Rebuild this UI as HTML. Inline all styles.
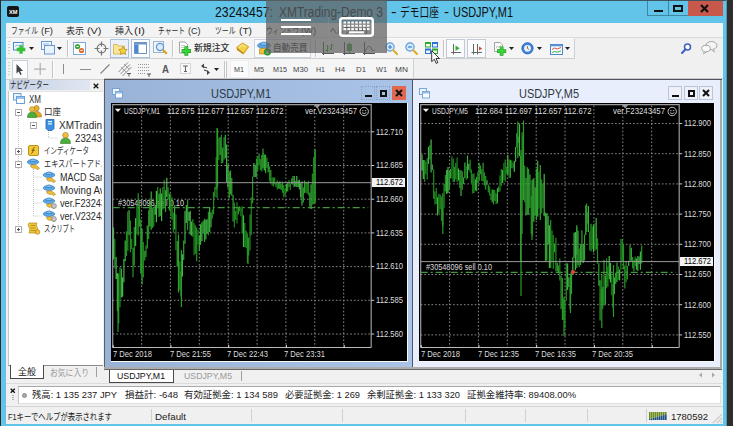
<!DOCTYPE html>
<html lang="ja"><head><meta charset="utf-8"><title>MetaTrader 4</title>
<style>
html,body{margin:0;padding:0;}
body{width:733px;height:426px;overflow:hidden;position:relative;background:#2e2e2e;font-family:"Liberation Sans","Noto Sans CJK JP",sans-serif;}
div,span.t,svg{position:absolute;box-sizing:border-box;}
span.t{white-space:nowrap;display:block;}
svg{overflow:visible;}
</style></head><body>

<div style="left:0px;top:0px;width:727px;height:426px;background:#62c4e8;"></div>
<div style="left:0px;top:0px;width:727px;height:1.3px;background:#3d5560;"></div>
<div style="left:0px;top:0px;width:1px;height:426px;background:#2b2b2b;"></div>
<div style="left:726px;top:0px;width:1px;height:426px;background:#4f9ab8;"></div>
<div style="left:7px;top:5.5px;width:11.5px;height:11.5px;background:#151515;border-radius:2px;"></div>
<span class="t" style="left:8.5px;top:8.5px;font-size:5.5px;line-height:6px;color:#fff;transform:scaleX(1.0303);transform-origin:0 0;font-weight:bold;">XM</span>
<span class="t" style="left:215px;top:3px;font-size:14px;line-height:18px;color:#111;transform:scaleX(0.8763);transform-origin:0 0;">23243457:</span>
<span class="t" style="left:278.5px;top:3px;font-size:14px;line-height:18px;color:#111;transform:scaleX(0.8550);transform-origin:0 0;">XMTrading-Demo 3</span>
<span class="t" style="left:390.5px;top:3px;font-size:14px;line-height:18px;color:#111;transform:scaleX(1.1773);transform-origin:0 0;">-</span>
<span class="t" style="left:400px;top:3.6px;font-size:12.5px;line-height:18px;color:#111;transform:scaleX(0.7798);transform-origin:0 0;">デモ口座</span>
<span class="t" style="left:444px;top:3px;font-size:14px;line-height:18px;color:#111;transform:scaleX(1.0702);transform-origin:0 0;">-</span>
<span class="t" style="left:453px;top:3px;font-size:14px;line-height:18px;color:#111;transform:scaleX(0.7814);transform-origin:0 0;">USDJPY,M1</span>
<div style="left:647px;top:1px;width:21px;height:15px;border-left:1px solid #3f86a3;border-bottom:1px solid #3f86a3;"></div>
<div style="left:668px;top:1px;width:20px;height:15px;border-left:1px solid #3f86a3;border-bottom:1px solid #3f86a3;"></div>
<div style="left:688px;top:1px;width:35px;height:15px;background:#c9584c;"></div>
<div style="left:654px;top:10px;width:9px;height:2px;background:#111;"></div>
<div style="left:673px;top:5px;width:10px;height:7px;border:2px solid #111;"></div>
<svg style="left:700px;top:4px;" width="9" height="9" viewBox="0 0 9 9" ><path d="M1 1L8 8M8 1L1 8" stroke="#111" stroke-width="2.2" fill="none"/></svg>
<div style="left:6px;top:23px;width:716.5px;height:400.8px;background:#f0f0f0;"></div>
<div style="left:6px;top:23px;width:716.5px;height:14px;background:#f3f3f3;"></div>
<span class="t" style="left:11px;top:23.5px;font-size:9px;line-height:14px;color:#2c2c2c;transform:scaleX(0.7497);transform-origin:0 0;">ファイル</span>
<span class="t" style="left:40.5px;top:23.5px;font-size:9.5px;line-height:14px;color:#2c2c2c;transform:scaleX(0.9884);transform-origin:0 0;">(F)</span>
<span class="t" style="left:66px;top:23.5px;font-size:9px;line-height:14px;color:#2c2c2c;transform:scaleX(0.9991);transform-origin:0 0;">表示</span>
<span class="t" style="left:86.5px;top:23.5px;font-size:9.5px;line-height:14px;color:#2c2c2c;transform:scaleX(1.1443);transform-origin:0 0;">(V)</span>
<span class="t" style="left:115px;top:23.5px;font-size:9px;line-height:14px;color:#2c2c2c;transform:scaleX(0.9991);transform-origin:0 0;">挿入</span>
<span class="t" style="left:133.5px;top:23.5px;font-size:9.5px;line-height:14px;color:#2c2c2c;transform:scaleX(1.2265);transform-origin:0 0;">(I)</span>
<span class="t" style="left:158px;top:23.5px;font-size:9px;line-height:14px;color:#2c2c2c;transform:scaleX(0.7516);transform-origin:0 0;">チャート</span>
<span class="t" style="left:187.5px;top:23.5px;font-size:9.5px;line-height:14px;color:#2c2c2c;transform:scaleX(0.9467);transform-origin:0 0;">(C)</span>
<span class="t" style="left:215px;top:23.5px;font-size:9px;line-height:14px;color:#2c2c2c;transform:scaleX(0.7588);transform-origin:0 0;">ツール</span>
<span class="t" style="left:239px;top:23.5px;font-size:9.5px;line-height:14px;color:#2c2c2c;transform:scaleX(1.0708);transform-origin:0 0;">(T)</span>
<span class="t" style="left:266px;top:23.5px;font-size:9px;line-height:14px;color:#2c2c2c;transform:scaleX(0.7331);transform-origin:0 0;">ウィンドウ</span>
<span class="t" style="left:301px;top:23.5px;font-size:9.5px;line-height:14px;color:#2c2c2c;transform:scaleX(0.9806);transform-origin:0 0;">(W)</span>
<span class="t" style="left:330px;top:23.5px;font-size:9px;line-height:14px;color:#2c2c2c;transform:scaleX(0.7588);transform-origin:0 0;">ヘルプ</span>
<span class="t" style="left:353.5px;top:23.5px;font-size:9.5px;line-height:14px;color:#2c2c2c;transform:scaleX(1.0225);transform-origin:0 0;">(H)</span>
<div style="left:6px;top:37px;width:717px;height:1px;background:#dadada;"></div>
<div style="left:6px;top:38px;width:568.5px;height:21px;background:#f5f5f5;border-top:1px solid #fcfcfc;border-bottom:1px solid #cfcfcf;border-right:1px solid #cfcfcf;"></div>
<div style="left:6px;top:59px;width:408px;height:21px;background:#f5f5f5;border-bottom:1px solid #cfcfcf;border-right:1px solid #cfcfcf;"></div>
<div style="left:8px;top:41px;width:1.5px;height:15px;background:repeating-linear-gradient(#cfcfcf 0 1px,#f5f5f5 1px 3px);"></div>
<div style="left:8px;top:62px;width:1.5px;height:15px;background:repeating-linear-gradient(#cfcfcf 0 1px,#f5f5f5 1px 3px);"></div>
<svg style="left:13px;top:41px;" width="15" height="15" viewBox="0 0 15 15" ><rect x="0.500" y="1.500" width="9.500" height="7.500" fill="#eef5fd" stroke="#4a86cc"/><path d="M2 5.500l2-1.500 2 1 2.500-1.500" stroke="#7aa7dc" stroke-width="0.800" fill="none"/><path d="M8 4.200v8.600M3.700 8.500h8.600" stroke="#34c234" stroke-width="3.300"/></svg>
<svg style="left:29px;top:47px;" width="5" height="3" viewBox="0 0 5 3" ><path d="M0 0h5L2.500 3z" fill="#222"/></svg>
<svg style="left:41px;top:41px;" width="15" height="15" viewBox="0 0 15 15" ><rect x="0.500" y="0.500" width="10" height="8" fill="#f4f9ff" stroke="#5b8fd0" stroke-width="0.900"/><rect x="3.500" y="4.500" width="10" height="8.500" fill="#eaf2fc" stroke="#5b8fd0" stroke-width="0.900"/><path d="M2 3h6" stroke="#7aa7dc" stroke-width="0.800"/></svg>
<svg style="left:57px;top:47px;" width="5" height="3" viewBox="0 0 5 3" ><path d="M0 0h5L2.500 3z" fill="#222"/></svg>
<div style="left:67px;top:40px;width:1px;height:17px;background:#c4c4c4;"></div>
<div style="left:68px;top:40px;width:1px;height:17px;background:#fdfdfd;"></div>
<div style="left:73px;top:42px;width:13px;height:13px;background:#fff;border:1px solid #7aaae0;"></div>
<svg style="left:74px;top:43px;" width="11" height="11" viewBox="0 0 11 11" ><circle cx="3.500" cy="3.500" r="2.600" fill="#3aa83a"/><circle cx="7.500" cy="7.500" r="2.600" fill="#e26a2c"/><path d="M2.300 3.500h2.400M6.300 7.500h2.400" stroke="#fff" stroke-width="0.900"/></svg>
<svg style="left:94px;top:41px;" width="15" height="15" viewBox="0 0 15 15" ><circle cx="7.500" cy="7.500" r="4.300" fill="none" stroke="#777" stroke-width="1.200"/><path d="M7.500 0.500v5M7.500 9.500v5M0.500 7.500h5M9.500 7.500h5" stroke="#777" stroke-width="1.200"/></svg>
<div style="left:110px;top:39px;width:19px;height:19px;background:#eaf1fb;border:1px solid #a9c0e0;"></div>
<svg style="left:113px;top:41px;" width="15" height="15" viewBox="0 0 15 15" ><path d="M0.500 3.500h4l1 1.500h6v8h-11z" fill="#fae596" stroke="#d1b04a" stroke-width="0.800"/><path d="M10 5.500l1.300 2.700 3 .400-2.200 2 .600 2.900-2.700-1.500-2.700 1.500.600-2.900-2.200-2 3-.400z" fill="#f4d03f" stroke="#b88a12" stroke-width="0.700"/></svg>
<div style="left:131px;top:39px;width:19px;height:19px;background:#fdfdfe;border:1px solid #a9c0e0;"></div>
<svg style="left:134px;top:42px;" width="13" height="12" viewBox="0 0 13 12" ><rect x="0.500" y="0.500" width="12" height="11" fill="#fff" stroke="#6e94c8"/><rect x="0.500" y="0.500" width="12" height="2" fill="#6e94c8"/><rect x="1" y="2.500" width="3.500" height="8.500" fill="#4f86d0"/></svg>
<svg style="left:153px;top:41px;" width="16" height="16" viewBox="0 0 16 16" ><rect x="0.500" y="0.500" width="10" height="11" fill="#f2f6fb" stroke="#9fb3cc"/><circle cx="7" cy="6" r="3.600" fill="#d8ecfb" stroke="#5b93d6" stroke-width="1.200"/><path d="M9.800 8.800l4 4" stroke="#d9a31e" stroke-width="2.200"/></svg>
<div style="left:172px;top:40px;width:1px;height:17px;background:#c4c4c4;"></div>
<div style="left:173px;top:40px;width:1px;height:17px;background:#fdfdfd;"></div>
<svg style="left:179px;top:41px;" width="13" height="16" viewBox="0 0 13 16" ><path d="M0.500 1h5.500l2.500 2.500v8.500h-8z" fill="#fff" stroke="#9a9a9a" stroke-width="0.900"/><path d="M2 4.500h4M2 6.500h3" stroke="#bbb" stroke-width="0.800"/><path d="M7.300 5.300v9.400M2.600 10h9.400" stroke="#1f9a1f" stroke-width="3.800"/><path d="M7.300 5.800v8.400M3.100 10h8.400" stroke="#3bd33b" stroke-width="2.600"/></svg>
<span class="t" style="left:194px;top:40.5px;font-size:9.3px;line-height:15px;color:#333;transform:scaleX(0.9542);transform-origin:0 0;font-weight:500;">新規注文</span>
<svg style="left:236px;top:42px;" width="13" height="13" viewBox="0 0 13 13" ><path d="M0.500 5.500l6-4.500 6 3.500-5 7z" fill="#f5d04a" stroke="#c4951c" stroke-width="0.800"/><path d="M0.500 5.500l.500 2.500 6.500 4.500 0-1.500z" fill="#b8860b"/><path d="M7.500 11v1.500l5-7v-1.500z" fill="#d9a520"/><path d="M3 5.500l3.500-2.500 3 2" stroke="#fcefb0" stroke-width="1" fill="none"/></svg>
<div style="left:254px;top:39px;width:57px;height:19px;background:#fafbfd;border:1px solid #cdd3de;"></div>
<svg style="left:257px;top:41px;" width="15" height="15" viewBox="0 0 15 15" ><ellipse cx="7" cy="4.500" rx="6.500" ry="3" fill="#5ba7e3" stroke="#2f74b8" stroke-width="0.600"/><path d="M3.500 4c0-4 7-4 7 0z" fill="#86c4f2" stroke="#2f74b8" stroke-width="0.600"/><path d="M2.500 8c2-1 6-1 8 0l1 5h-9z" fill="#f0c23a" stroke="#a87613" stroke-width="0.600"/><circle cx="10.500" cy="11" r="3.300" fill="#35a835" stroke="#1d7a1d" stroke-width="0.600"/><path d="M9.500 9.300l2.600 1.700-2.600 1.700z" fill="#fff"/></svg>
<span class="t" style="left:273px;top:40.5px;font-size:9.3px;line-height:15px;color:#333;transform:scaleX(0.9273);transform-origin:0 0;font-weight:500;">自動売買</span>
<div style="left:315px;top:40px;width:1px;height:17px;background:#c4c4c4;"></div>
<div style="left:316px;top:40px;width:1px;height:17px;background:#fdfdfd;"></div>
<svg style="left:322px;top:42px;" width="12" height="13" viewBox="0 0 12 13" ><path d="M1.500 0v13M0 11.500h12" stroke="#555" stroke-width="1"/><path d="M5.500 3v7M3.500 8.500h2M5.500 4.500h2M9.500 2v6M9.500 3h2M7.500 7h2" stroke="#2a9a2a" stroke-width="1.200"/></svg>
<svg style="left:343px;top:42px;" width="12" height="13" viewBox="0 0 12 13" ><path d="M1.500 0v13M0 11.500h12" stroke="#555" stroke-width="1"/><path d="M6.500 0.500v10" stroke="#2a9a2a" stroke-width="1"/><rect x="4.500" y="2.500" width="4" height="6" fill="#3cb03c" stroke="#1d7a1d" stroke-width="0.700"/></svg>
<svg style="left:363px;top:42px;" width="12" height="13" viewBox="0 0 12 13" ><path d="M1.500 0v13M0 11.500h12" stroke="#555" stroke-width="1"/><path d="M2 10c2-6 5-7 6-4s2 3 3.500 2" stroke="#555" stroke-width="1" fill="none"/></svg>
<svg style="left:384.5px;top:41.5px;" width="14" height="14" viewBox="0 0 14 14" ><circle cx="5" cy="5" r="4.100" fill="#d6eafb" stroke="#5b9bd8" stroke-width="1.200"/><path d="M3 5h4M5 3v4" stroke="#3a7fd0" stroke-width="1.200"/><path d="M8.300 8.300l3.700 3.700" stroke="#dcae32" stroke-width="2.200" stroke-linecap="round"/></svg>
<svg style="left:404.5px;top:41.5px;" width="14" height="14" viewBox="0 0 14 14" ><circle cx="5" cy="5" r="4.100" fill="#d6eafb" stroke="#5b9bd8" stroke-width="1.200"/><path d="M3 5h4" stroke="#3a7fd0" stroke-width="1.200"/><path d="M8.300 8.300l3.700 3.700" stroke="#dcae32" stroke-width="2.200" stroke-linecap="round"/></svg>
<svg style="left:425px;top:42px;" width="13" height="12" viewBox="0 0 13 12" ><rect x="0" y="0" width="6" height="5.500" fill="#2faa2f"/><rect x="7" y="0" width="6" height="5.500" fill="#2d72d8"/><rect x="0" y="6.500" width="6" height="5.500" fill="#2d72d8"/><rect x="7" y="6.500" width="6" height="5.500" fill="#2faa2f"/><rect x="1" y="2" width="4" height="2.500" fill="#f2fbf2"/><rect x="8" y="2" width="4" height="2.500" fill="#eef5ff"/><rect x="1" y="8.500" width="4" height="2.500" fill="#eef5ff"/><rect x="8" y="8.500" width="4" height="2.500" fill="#dff5df"/></svg>
<div style="left:443px;top:40px;width:1px;height:17px;background:#c4c4c4;"></div>
<div style="left:444px;top:40px;width:1px;height:17px;background:#fdfdfd;"></div>
<div style="left:446px;top:39px;width:19px;height:19px;background:#fafbfd;border:1px solid #c3cad6;"></div>
<svg style="left:450px;top:43px;" width="12" height="12" viewBox="0 0 12 12" ><path d="M3.500 1v10.500M1 9.500h10" stroke="#666" stroke-width="1"/><path d="M5.500 2.500l4.200 2.800-4.200 2.800z" fill="#35b035"/></svg>
<div style="left:467px;top:39px;width:19px;height:19px;background:#fafbfd;border:1px solid #c3cad6;"></div>
<svg style="left:471px;top:43px;" width="12" height="12" viewBox="0 0 12 12" ><path d="M2.500 1v10.500M0.500 9.500h10.500M6.500 1v10.500" stroke="#666" stroke-width="1"/><path d="M8 3.500l3.200 2-3.200 2z" fill="#d8432a"/></svg>
<svg style="left:494px;top:42px;" width="14" height="15" viewBox="0 0 14 15" ><path d="M0.500 0.500h5.500l2.500 2.500v6.500h-8z" fill="#fff" stroke="#9a9a9a" stroke-width="0.900"/><path d="M2 6.500l1.500-2.500 1.500 1.500 1.500-2" stroke="#aaa" stroke-width="0.800" fill="none"/><path d="M7.600 4.600v9.200M3 9.200h9.200" stroke="#1f9a1f" stroke-width="3.700"/><path d="M7.600 5.100v8.200M3.500 9.200h8.200" stroke="#3bd33b" stroke-width="2.500"/></svg>
<svg style="left:509px;top:47px;" width="5" height="3" viewBox="0 0 5 3" ><path d="M0 0h5L2.500 3z" fill="#222"/></svg>
<svg style="left:521px;top:42px;" width="13" height="13" viewBox="0 0 13 13" ><circle cx="6.500" cy="6.300" r="5.600" fill="#3a84dc" stroke="#2360b5" stroke-width="0.900"/><circle cx="6.500" cy="6.300" r="3.400" fill="#e9f1fb"/><path d="M6.500 4.200v2.300l1.600 1" stroke="#b0523f" stroke-width="0.900" fill="none"/></svg>
<svg style="left:537px;top:47px;" width="5" height="3" viewBox="0 0 5 3" ><path d="M0 0h5L2.500 3z" fill="#222"/></svg>
<svg style="left:549.5px;top:43.5px;" width="13" height="11" viewBox="0 0 13 11" ><rect x="0.500" y="0.500" width="12" height="10" fill="#f4f9ff" stroke="#4a86cc"/><rect x="0.500" y="0.500" width="12" height="1.800" fill="#5b93d6"/><path d="M2 5.500l2.500-1.500 2.500 1 4-1.500" stroke="#d8432a" stroke-width="0.900" fill="none"/><path d="M2 8.500l2.500-1 2.500.700 4-1.200" stroke="#2fae2f" stroke-width="0.900" fill="none"/></svg>
<svg style="left:565px;top:47px;" width="5" height="3" viewBox="0 0 5 3" ><path d="M0 0h5L2.500 3z" fill="#222"/></svg>
<div style="left:12px;top:60px;width:16px;height:19px;background:#fbfcfe;border:1px solid #c9cfda;"></div>
<svg style="left:15.5px;top:63.5px;" width="8" height="12" viewBox="0 0 8 12" ><path d="M0.500 0v9.500l2.200-2.100 1.600 3.600 1.400-.600-1.600-3.500h3z" fill="#444"/></svg>
<svg style="left:34px;top:63px;" width="12" height="12" viewBox="0 0 12 12" ><path d="M6.200 0v12M0 6.200h12" stroke="#b0b0b0" stroke-width="1.200"/></svg>
<div style="left:52px;top:61px;width:1px;height:17px;background:#c4c4c4;"></div>
<div style="left:53px;top:61px;width:1px;height:17px;background:#fdfdfd;"></div>
<div style="left:63px;top:64px;width:1px;height:10px;background:#8c8c8c;"></div>
<div style="left:80px;top:69px;width:11px;height:1px;background:#8c8c8c;"></div>
<svg style="left:100px;top:64px;" width="10" height="10" viewBox="0 0 10 10" ><path d="M0.500 9.500L9.500 0.500" stroke="#808080" stroke-width="1.100"/></svg>
<svg style="left:118px;top:62px;" width="14" height="15" viewBox="0 0 14 15" ><path d="M0.500 10L10 0.500M2.500 12L12 2.500M4.500 14L13.500 5" stroke="#8a8a8a" stroke-width="1"/><path d="M3 5l5 5M6 2l5 5" stroke="#8a8a8a" stroke-width="0.800"/><path d="M9 11.500h4M11 11.500v3" stroke="#333" stroke-width="0.800"/></svg>
<svg style="left:138px;top:63px;" width="14" height="14" viewBox="0 0 14 14" ><path d="M0 1.500h12M0 4.500h12M0 7.500h12M0 10.500h8" stroke="#9a9a9a" stroke-width="1" stroke-dasharray="1 1"/><path d="M9 11h4M11 11v3" stroke="#333" stroke-width="0.800"/></svg>
<span class="t" style="left:162px;top:63px;font-size:10px;line-height:13px;color:#555;transform:scaleX(0.9676);transform-origin:0 0;font-weight:bold;">A</span>
<svg style="left:180px;top:63px;" width="11" height="11" viewBox="0 0 11 11" ><rect x="0.500" y="0.500" width="10" height="10" fill="#fafafa" stroke="#b0b0b0" stroke-dasharray="1 1"/><path d="M3 3h5M5.500 3v5.500M4 8.500h3" stroke="#666" stroke-width="1.100"/></svg>
<svg style="left:200px;top:63px;" width="11" height="13" viewBox="0 0 11 13" ><path d="M1 3l3-2.500v5zM10 9.500l-3 2.500v-5z" fill="#444"/><path d="M4 4l3 1M7 8l-3-1" stroke="#444" stroke-width="1.200"/></svg>
<svg style="left:214px;top:68px;" width="5" height="3" viewBox="0 0 5 3" ><path d="M0 0h5L2.500 3z" fill="#222"/></svg>
<div style="left:224px;top:61px;width:1px;height:17px;background:#c4c4c4;"></div>
<div style="left:225px;top:61px;width:1px;height:17px;background:#fdfdfd;"></div>
<div style="left:226px;top:61px;width:1px;height:17px;background:#c4c4c4;"></div>
<div style="left:230px;top:60px;width:19px;height:18px;background:#fbfbfb;border:1px solid #eceef2;"></div>
<span class="t" style="left:234px;top:64px;font-size:8px;line-height:11px;color:#444;transform:scaleX(0.8989);transform-origin:0 0;">M1</span>
<span class="t" style="left:254px;top:64px;font-size:8px;line-height:11px;color:#444;transform:scaleX(0.8989);transform-origin:0 0;">M5</span>
<span class="t" style="left:273px;top:64px;font-size:8px;line-height:11px;color:#444;transform:scaleX(0.8996);transform-origin:0 0;">M15</span>
<span class="t" style="left:293px;top:64px;font-size:8px;line-height:11px;color:#444;transform:scaleX(0.9639);transform-origin:0 0;">M30</span>
<span class="t" style="left:316px;top:64px;font-size:8px;line-height:11px;color:#444;transform:scaleX(0.8794);transform-origin:0 0;">H1</span>
<span class="t" style="left:335px;top:64px;font-size:8px;line-height:11px;color:#444;transform:scaleX(0.9771);transform-origin:0 0;">H4</span>
<span class="t" style="left:356px;top:64px;font-size:8px;line-height:11px;color:#444;transform:scaleX(0.9771);transform-origin:0 0;">D1</span>
<span class="t" style="left:376px;top:64px;font-size:8px;line-height:11px;color:#444;transform:scaleX(0.9167);transform-origin:0 0;">W1</span>
<span class="t" style="left:395px;top:64px;font-size:8px;line-height:11px;color:#444;transform:scaleX(1.0439);transform-origin:0 0;">MN</span>
<svg style="left:681px;top:43px;" width="11" height="11" viewBox="0 0 11 11" ><circle cx="6.500" cy="4" r="3" fill="#fff" stroke="#3d5fc0" stroke-width="1.500"/><path d="M4.500 6.300l-3.500 3.700" stroke="#3d5fc0" stroke-width="2" stroke-linecap="round"/></svg>
<svg style="left:701px;top:41px;" width="17" height="13" viewBox="0 0 17 13" ><ellipse cx="10.500" cy="4.500" rx="5.500" ry="4" fill="#f4f4f4" stroke="#9a9a9a" stroke-width="0.900"/><path d="M12 8l1.500 3-3.500-2.700" fill="#f4f4f4" stroke="#9a9a9a" stroke-width="0.800"/><ellipse cx="5" cy="7.500" rx="4.300" ry="3.200" fill="#fafafa" stroke="#9a9a9a" stroke-width="0.900"/><path d="M3.500 10.300l-1 2.500 3-2" fill="#fafafa" stroke="#9a9a9a" stroke-width="0.800"/></svg>
<div style="left:7px;top:80px;width:96px;height:303px;background:#f0f0f0;"></div>
<div style="left:9px;top:80px;width:81px;height:10.3px;background:linear-gradient(90deg,#c3cfe3,#e1e7f1);"></div>
<span class="t" style="left:10px;top:79px;font-size:9px;line-height:12px;color:#222;transform:scaleX(0.7220);transform-origin:0 0;">ナビゲーター</span>
<svg style="left:93px;top:83px;" width="6" height="6" viewBox="0 0 6 6" ><path d="M0.7 0.7L5.3 5.3M5.3 0.7L0.7 5.3" stroke="#111" stroke-width="1.3" fill="none"/></svg>
<div style="left:8px;top:91px;width:95.3px;height:275px;background:#fff;border:1px solid #e3e3e3;border-left-color:#c6c6c6;border-right:none;border-bottom-color:#8c8c8c;"></div>
<svg style="left:0px;top:0px;" width="110" height="260" viewBox="0 0 110 260" ><path d="M18.5 116V229M33.5 129V125M18.5 151H24M18.5 229H24M48.5 130V138H58M33.5 169V216M33.5 177H42M33.5 190H42M33.5 203H42M33.5 216H42" stroke="#c4c4c4" stroke-width="1" stroke-dasharray="1 1" fill="none"/></svg>
<svg style="left:13px;top:93px;" width="12" height="11" viewBox="0 0 12 11" ><rect x="0.5" y="0.5" width="7.5" height="6.5" fill="#eaf3fc" stroke="#6a9fdc"/><rect x="3.5" y="3.5" width="8" height="7" fill="#fff" stroke="#6a9fdc"/><rect x="4" y="4" width="7" height="2" fill="#9cc2ec"/></svg>
<div style="left:29px;top:91px;width:72.5px;height:15px;overflow:hidden;">
<span class="t" style="left:0px;top:0.5px;font-size:10px;line-height:15px;color:#2a2a2a;transform:scaleX(0.8000);transform-origin:0 0;">XM</span>
</div>
<svg style="left:15px;top:109px;" width="7" height="7" viewBox="0 0 7 7" ><rect x="0.5" y="0.5" width="6" height="6" fill="#fff" stroke="#adadad"/><path d="M2 3.5h3" stroke="#555" stroke-width="1"/></svg>
<svg style="left:27px;top:105px;" width="15" height="13" viewBox="0 0 15 13" ><circle cx="9.5" cy="3.3" r="2.7" fill="#e8b12d" stroke="#a87613" stroke-width="0.6"/><path d="M4.5 12c0-4 2-5.5 5-5.5s5 1.5 5 5.5z" fill="#e0a52a" stroke="#a87613" stroke-width="0.6"/><circle cx="5" cy="4.2" r="2.5" fill="#f0c040" stroke="#a87613" stroke-width="0.6"/><path d="M0.5 12.5c0-4 2-5.2 4.5-5.2s4.5 1.2 4.5 5.2z" fill="#4cae3a" stroke="#2d7d22" stroke-width="0.6"/></svg>
<div style="left:44px;top:104px;width:57.5px;height:15px;overflow:hidden;">
<span class="t" style="left:0px;top:0.5px;font-size:9px;line-height:15px;color:#2a2a2a;transform:scaleX(0.9436);transform-origin:0 0;">口座</span>
</div>
<svg style="left:30px;top:122px;" width="7" height="7" viewBox="0 0 7 7" ><rect x="0.5" y="0.5" width="6" height="6" fill="#fff" stroke="#adadad"/><path d="M2 3.5h3" stroke="#555" stroke-width="1"/></svg>
<svg style="left:45px;top:118px;" width="10" height="13" viewBox="0 0 10 13" ><path d="M1 1.5h8v9l-2 2H3l-2-2z" fill="#3d8fe0" stroke="#1f62b0" stroke-width="0.8"/><rect x="3" y="3" width="4" height="1.2" fill="#dff"/><rect x="3" y="5.3" width="4" height="1.2" fill="#dff"/></svg>
<div style="left:59px;top:117px;width:42.5px;height:15px;overflow:hidden;">
<span class="t" style="left:0px;top:0.5px;font-size:10px;line-height:15px;color:#2a2a2a;transform:scaleX(1.0004);transform-origin:0 0;">XMTrading-Demo 3</span>
</div>
<svg style="left:60px;top:132px;" width="11" height="12" viewBox="0 0 11 12" ><circle cx="5.5" cy="3.2" r="2.8" fill="#f0c040" stroke="#a87613" stroke-width="0.6"/><path d="M0.5 11.5c0-4 2-5.3 5-5.3s5 1.3 5 5.3z" fill="#4cae3a" stroke="#2d7d22" stroke-width="0.6"/></svg>
<div style="left:75px;top:130px;width:26.5px;height:15px;overflow:hidden;">
<span class="t" style="left:0px;top:0.5px;font-size:10px;line-height:15px;color:#2a2a2a;transform:scaleX(0.9708);transform-origin:0 0;">23243457</span>
</div>
<svg style="left:15px;top:148px;" width="7" height="7" viewBox="0 0 7 7" ><rect x="0.5" y="0.5" width="6" height="6" fill="#fff" stroke="#adadad"/><path d="M2 3.5h3M3.5 2v3" stroke="#555" stroke-width="1"/></svg>
<svg style="left:28px;top:145px;" width="11" height="11" viewBox="0 0 11 11" ><rect x="0.5" y="0.5" width="10" height="10" rx="1.5" fill="#f3c93c" stroke="#b8901a"/><path d="M6.8 2.5c-1.6-.3-1.6 1-1.9 3s-.5 3-1.8 2.8M3.6 5.3h3.2" stroke="#6b4b00" stroke-width="0.9" fill="none"/></svg>
<div style="left:44px;top:143px;width:57.5px;height:15px;overflow:hidden;">
<span class="t" style="left:0px;top:0.5px;font-size:9px;line-height:15px;color:#2a2a2a;transform:scaleX(0.7214);transform-origin:0 0;">インディケータ</span>
</div>
<svg style="left:15px;top:161px;" width="7" height="7" viewBox="0 0 7 7" ><rect x="0.5" y="0.5" width="6" height="6" fill="#fff" stroke="#adadad"/><path d="M2 3.5h3" stroke="#555" stroke-width="1"/></svg>
<svg style="left:27px;top:158px;" width="14" height="12" viewBox="0 0 14 12" ><ellipse cx="6" cy="4" rx="5.8" ry="2.6" fill="#5ba7e3" stroke="#2f74b8" stroke-width="0.6"/><path d="M3 3.5c0-3.5 6-3.5 6 0z" fill="#7fc0f0" stroke="#2f74b8" stroke-width="0.6"/><path d="M3.5 7.5c2-1 4-1 5.5 0l3.5 2.5-1.5 1.6-3-1.6c-2 .6-4 0-4.500-2.500z" fill="#f0c23a" stroke="#a87613" stroke-width="0.6"/></svg>
<div style="left:44px;top:156px;width:57.5px;height:15px;overflow:hidden;">
<span class="t" style="left:0px;top:0.5px;font-size:9px;line-height:15px;color:#2a2a2a;transform:scaleX(0.7946);transform-origin:0 0;">エキスパートアドバイザ</span>
</div>
<svg style="left:43px;top:171px;" width="14" height="12" viewBox="0 0 14 12" ><ellipse cx="6" cy="4" rx="5.8" ry="2.6" fill="#5ba7e3" stroke="#2f74b8" stroke-width="0.6"/><path d="M3 3.5c0-3.5 6-3.5 6 0z" fill="#7fc0f0" stroke="#2f74b8" stroke-width="0.6"/><path d="M3.5 7.5c2-1 4-1 5.5 0l3.5 2.5-1.5 1.6-3-1.6c-2 .6-4 0-4.500-2.500z" fill="#f0c23a" stroke="#a87613" stroke-width="0.6"/></svg>
<div style="left:60px;top:169px;width:41.5px;height:15px;overflow:hidden;">
<span class="t" style="left:0px;top:0.5px;font-size:10px;line-height:15px;color:#2a2a2a;transform:scaleX(0.8998);transform-origin:0 0;">MACD Sample</span>
</div>
<svg style="left:43px;top:184px;" width="14" height="12" viewBox="0 0 14 12" ><ellipse cx="6" cy="4" rx="5.8" ry="2.6" fill="#5ba7e3" stroke="#2f74b8" stroke-width="0.6"/><path d="M3 3.5c0-3.5 6-3.5 6 0z" fill="#7fc0f0" stroke="#2f74b8" stroke-width="0.6"/><path d="M3.5 7.5c2-1 4-1 5.5 0l3.5 2.5-1.5 1.6-3-1.6c-2 .6-4 0-4.500-2.500z" fill="#f0c23a" stroke="#a87613" stroke-width="0.6"/></svg>
<div style="left:60px;top:182px;width:41.5px;height:15px;overflow:hidden;">
<span class="t" style="left:0px;top:0.5px;font-size:10px;line-height:15px;color:#2a2a2a;transform:scaleX(0.9723);transform-origin:0 0;">Moving Average</span>
</div>
<svg style="left:43px;top:197px;" width="14" height="12" viewBox="0 0 14 12" ><ellipse cx="6" cy="4" rx="5.8" ry="2.6" fill="#5ba7e3" stroke="#2f74b8" stroke-width="0.6"/><path d="M3 3.5c0-3.5 6-3.5 6 0z" fill="#7fc0f0" stroke="#2f74b8" stroke-width="0.6"/><path d="M3.5 7.5c2-1 4-1 5.5 0l3.5 2.5-1.5 1.6-3-1.6c-2 .6-4 0-4.500-2.500z" fill="#f0c23a" stroke="#a87613" stroke-width="0.6"/></svg>
<svg style="left:51px;top:203px;" width="6" height="6" viewBox="0 0 6 6" ><circle cx="3" cy="3" r="2.4" fill="#c9c9c9" stroke="#7a7a7a" stroke-width="0.7"/></svg>
<div style="left:60px;top:195px;width:41.5px;height:15px;overflow:hidden;">
<span class="t" style="left:0px;top:0.5px;font-size:10px;line-height:15px;color:#2a2a2a;transform:scaleX(0.9217);transform-origin:0 0;">ver.F23243457</span>
</div>
<svg style="left:43px;top:210px;" width="14" height="12" viewBox="0 0 14 12" ><ellipse cx="6" cy="4" rx="5.8" ry="2.6" fill="#5ba7e3" stroke="#2f74b8" stroke-width="0.6"/><path d="M3 3.5c0-3.5 6-3.5 6 0z" fill="#7fc0f0" stroke="#2f74b8" stroke-width="0.6"/><path d="M3.5 7.5c2-1 4-1 5.5 0l3.5 2.5-1.5 1.6-3-1.6c-2 .6-4 0-4.500-2.500z" fill="#f0c23a" stroke="#a87613" stroke-width="0.6"/></svg>
<svg style="left:51px;top:216px;" width="6" height="6" viewBox="0 0 6 6" ><circle cx="3" cy="3" r="2.4" fill="#c9c9c9" stroke="#7a7a7a" stroke-width="0.7"/></svg>
<div style="left:60px;top:208px;width:41.5px;height:15px;overflow:hidden;">
<span class="t" style="left:0px;top:0.5px;font-size:10px;line-height:15px;color:#2a2a2a;transform:scaleX(0.9102);transform-origin:0 0;">ver.V23243457</span>
</div>
<svg style="left:15px;top:226px;" width="7" height="7" viewBox="0 0 7 7" ><rect x="0.5" y="0.5" width="6" height="6" fill="#fff" stroke="#adadad"/><path d="M2 3.5h3M3.5 2v3" stroke="#555" stroke-width="1"/></svg>
<svg style="left:27px;top:222px;" width="14" height="13" viewBox="0 0 14 13" ><path d="M2 1h8c-1 1.500-1 2.500 0 4s1 3.500 0 6H2c1-2.500 1-4.500 0-6S1 2.500 2 1z" fill="#f1c73e" stroke="#b08a1a" stroke-width="0.7"/><path d="M3.500 3.500h5M3.500 6h5M3.500 8.500h5" stroke="#a27c12" stroke-width="0.7"/><circle cx="10.500" cy="10" r="2.300" fill="#f0c23a" stroke="#a87613" stroke-width="0.6"/></svg>
<div style="left:44px;top:221px;width:57.5px;height:15px;overflow:hidden;">
<span class="t" style="left:0px;top:0.5px;font-size:9px;line-height:15px;color:#2a2a2a;transform:scaleX(0.6886);transform-origin:0 0;">スクリプト</span>
</div>
<div style="left:10px;top:365px;width:34px;height:14px;background:#fff;border:1px solid #4a4a4a;border-top:none;"></div>
<span class="t" style="left:18px;top:366px;font-size:9px;line-height:13px;color:#111;transform:scaleX(0.9991);transform-origin:0 0;">全般</span>
<span class="t" style="left:50px;top:366.5px;font-size:9px;line-height:13px;color:#9a9a9a;transform:scaleX(0.8664);transform-origin:0 0;">お気に入り</span>
<div style="left:96px;top:367px;width:1px;height:10px;background:#a0a0a0;"></div>
<div style="left:104px;top:79px;width:618px;height:291px;background:#4d5666;border-top:1px solid #50555d;border-left:1px solid #5a5f68;"></div>
<div style="left:104px;top:367px;width:618px;height:1.7px;background:#adadad;"></div>
<div style="left:104px;top:368.7px;width:618px;height:1.2px;background:#686868;"></div>
<div style="left:720.3px;top:80px;width:1.4px;height:287px;background:#a8a8a8;"></div>
<div style="left:104px;top:78px;width:619px;height:1px;background:#c9c9c9;"></div>
<div style="left:105.2px;top:80px;width:307px;height:287px;background:linear-gradient(90deg,#98b3d5,#a9c4e7);"></div>
<div style="left:110.5px;top:103px;width:297.3px;height:259.3px;background:#f6f8fc;"></div>
<div style="left:110.5px;top:102.6px;width:296px;height:258.4px;background:#000;"></div>
<span class="t" style="left:211px;top:86px;font-size:13px;line-height:15px;color:#2e3846;transform:scaleX(0.8416);transform-origin:0 0;">USDJPY,M1</span>
<svg style="left:112px;top:87.5px;" width="11" height="11" viewBox="0 0 11 11" ><rect x="0.5" y="0.5" width="7" height="6" fill="#eef5fd" stroke="#6f9fd8" stroke-width="0.9"/><rect x="3.5" y="3.5" width="7" height="6.5" fill="#fff" stroke="#6f9fd8" stroke-width="0.9"/><rect x="4" y="4" width="6" height="1.6" fill="#9cc0ea"/></svg>
<div style="left:360.5px;top:86px;width:14px;height:14px;border:1px dotted #89a2c5;"></div>
<div style="left:375.5px;top:86px;width:14px;height:14px;border:1px dotted #89a2c5;"></div>
<div style="left:391.5px;top:86px;width:14px;height:14px;background:#e2674f;"></div>
<div style="left:364.5px;top:95px;width:7px;height:2px;background:#111;"></div>
<div style="left:379.5px;top:90px;width:7px;height:7px;border:2px solid #111;"></div>
<svg style="left:394.5px;top:89px;" width="8" height="8" viewBox="0 0 8 8" ><path d="M1 1L7 7M7 1L1 7" stroke="#111" stroke-width="2" fill="none"/></svg>
<span class="t" style="left:117.7px;top:197.7px;font-size:8.3px;line-height:11px;color:#dcdcdc;transform:scaleX(0.8829);transform-origin:0 0;">#30548096 sell 0.10</span>
<svg style="left:0;top:0;" width="733" height="426" viewBox="0 0 733 426"><path d="M141.6 105.5V347" stroke="#8a8a8a" stroke-width="1" stroke-dasharray="1.6 2" fill="none"/><path d="M170.4 105.5V347" stroke="#8a8a8a" stroke-width="1" stroke-dasharray="1.6 2" fill="none"/><path d="M199.3 105.5V347" stroke="#8a8a8a" stroke-width="1" stroke-dasharray="1.6 2" fill="none"/><path d="M228.2 105.5V347" stroke="#8a8a8a" stroke-width="1" stroke-dasharray="1.6 2" fill="none"/><path d="M257.1 105.5V347" stroke="#8a8a8a" stroke-width="1" stroke-dasharray="1.6 2" fill="none"/><path d="M285.9 105.5V347" stroke="#8a8a8a" stroke-width="1" stroke-dasharray="1.6 2" fill="none"/><path d="M314.8 105.5V347" stroke="#8a8a8a" stroke-width="1" stroke-dasharray="1.6 2" fill="none"/><path d="M343.7 105.5V347" stroke="#8a8a8a" stroke-width="1" stroke-dasharray="1.6 2" fill="none"/><path d="M112.7 131.8H371.2" stroke="#8a8a8a" stroke-width="1" stroke-dasharray="1.6 2" fill="none"/><path d="M112.7 165.5H371.2" stroke="#8a8a8a" stroke-width="1" stroke-dasharray="1.6 2" fill="none"/><path d="M112.7 199.2H371.2" stroke="#8a8a8a" stroke-width="1" stroke-dasharray="1.6 2" fill="none"/><path d="M112.7 232.9H371.2" stroke="#8a8a8a" stroke-width="1" stroke-dasharray="1.6 2" fill="none"/><path d="M112.7 266.6H371.2" stroke="#8a8a8a" stroke-width="1" stroke-dasharray="1.6 2" fill="none"/><path d="M112.7 300.3H371.2" stroke="#8a8a8a" stroke-width="1" stroke-dasharray="1.6 2" fill="none"/><path d="M112.7 334.0H371.2" stroke="#8a8a8a" stroke-width="1" stroke-dasharray="1.6 2" fill="none"/><path d="M112.7 347.5V104.7H371.2V347.5" stroke="#9c9c9c" stroke-width="1.2" fill="none"/><path d="M112.7 347.5H371.2" stroke="#b8b8b8" stroke-width="1.2" fill="none"/><path d="M371.2 131.8h3" stroke="#c8c8c8" stroke-width="1"/><path d="M371.2 165.5h3" stroke="#c8c8c8" stroke-width="1"/><path d="M371.2 199.2h3" stroke="#c8c8c8" stroke-width="1"/><path d="M371.2 232.9h3" stroke="#c8c8c8" stroke-width="1"/><path d="M371.2 266.6h3" stroke="#c8c8c8" stroke-width="1"/><path d="M371.2 300.3h3" stroke="#c8c8c8" stroke-width="1"/><path d="M371.2 334.0h3" stroke="#c8c8c8" stroke-width="1"/><path d="M113.2 345v3" stroke="#e0e0e0" stroke-width="1"/><path d="M170.9 345v3" stroke="#e0e0e0" stroke-width="1"/><path d="M228.7 345v3" stroke="#e0e0e0" stroke-width="1"/><path d="M286.4 345v3" stroke="#e0e0e0" stroke-width="1"/><path d="M344.2 345v3" stroke="#e0e0e0" stroke-width="1"/><path d="M114.8 238.9V268.6M126.5 231.2V256.0M130.4 220.5V252.3M131.7 239.1V248.9M136.9 205.2V234.3M148.6 210.2V239.0M153.8 208.4V226.5M157.7 186.9V208.4M168.1 187.2V199.2M179.8 261.3V290.6M194.1 223.2V255.2M208.4 211.8V235.2M212.3 209.5V218.4M213.6 192.0V214.3M216.2 157.0V189.9M224.0 137.2V159.8M239.6 206.3V211.4M242.2 206.3V233.5M273.4 177.5V186.5M282.5 181.6V192.8M283.8 185.1V197.4M290.3 183.2V190.0M313.7 156.9V204.2" stroke="#1f8f1f" stroke-width="1.2" fill="none"/><path d="M118.7 273.5V323.2M140.8 219.5V273.7M142.1 228.9V284.4M147.3 225.6V248.5M159.0 193.7V217.0M160.3 188.3V216.1M165.5 190.2V212.0M169.4 193.4V210.4M172.0 197.6V219.8M177.2 241.0V266.6M178.5 234.6V292.5M183.7 240.5V260.1M203.2 220.7V233.3M204.5 218.7V241.9M214.9 187.1V197.2M217.5 128.5V187.5M222.7 147.4V163.1M229.2 171.6V198.3M230.5 170.6V194.4M231.8 178.1V195.7M233.1 194.9V221.4M238.3 207.9V214.6M259.1 153.6V165.3M265.6 154.7V173.3M270.8 169.9V183.5M276.0 182.9V187.2M287.7 182.0V191.5M303.3 187.5V202.6M304.6 180.5V193.0M309.8 192.4V206.8" stroke="#2ea32e" stroke-width="1.2" fill="none"/><path d="M123.9 258.9V282.3M125.2 240.4V261.2M129.1 209.9V235.1M135.6 218.0V246.0M151.2 191.6V229.7M174.6 205.9V229.4M185.0 210.9V243.8M191.5 221.4V235.8M199.3 235.9V250.8M200.6 224.2V244.7M205.8 219.7V239.5M207.1 219.3V233.7M211.0 212.6V227.3M225.3 134.7V158.2M226.6 144.5V181.9M253.9 163.1V177.1M264.3 154.4V170.4M268.2 162.0V172.3M286.4 184.1V191.8M298.1 180.6V187.0M299.4 179.7V189.5M302.0 181.2V205.5" stroke="#3cb043" stroke-width="1.2" fill="none"/><path d="M127.8 211.4V250.8M133.0 248.1V277.3M134.3 227.0V265.5M138.2 193.3V235.6M139.5 202.7V226.8M144.7 250.7V260.4M146.0 245.6V256.9M152.5 207.8V228.1M162.9 186.9V209.4M187.6 199.5V230.3M192.8 219.2V236.7M196.7 227.5V261.3M235.7 210.8V219.9M248.7 237.6V255.6M252.6 176.4V203.2M256.5 158.4V177.6M257.8 155.9V170.8M261.7 155.1V171.3M263.0 152.4V168.5M266.9 157.8V167.9M278.6 182.3V188.8M279.9 181.0V189.0M281.2 183.8V190.1M285.1 188.7V195.9M289.0 180.3V187.2M291.6 178.6V183.9M292.9 176.0V185.1M295.5 180.8V186.5M315.0 149.5V203.0" stroke="#279427" stroke-width="1.2" fill="none"/><path d="M113.5 227.5V259.5M116.1 257.0V279.0M117.4 273.2V311.0M121.3 268.4V297.5M122.6 277.3V296.7M149.9 201.4V226.4M155.1 204.9V214.8M156.4 191.1V222.2M161.6 193.4V220.9M166.8 177.7V197.0M181.1 271.8V296.4M182.4 254.3V276.5M186.3 204.9V223.0M188.9 212.0V220.7M190.2 210.8V234.5M201.9 222.5V241.0M209.7 206.9V231.9M220.1 137.3V155.1M227.9 164.7V187.5M243.5 215.3V247.0M255.2 164.8V177.1M294.2 176.0V187.0M296.8 176.0V187.0M300.7 183.3V197.5M311.1 184.3V208.9" stroke="#46b84a" stroke-width="1.2" fill="none"/><path d="M120.0 267.0V307.2M143.4 242.1V277.6M164.2 179.8V207.4M170.7 194.1V216.3M173.3 212.5V232.7M175.9 214.2V250.3M195.4 225.3V253.8M198.0 230.1V244.7M218.8 137.7V160.0M221.4 134.4V163.6M234.4 202.8V227.6M237.0 202.3V223.6M240.9 207.2V216.2M244.8 223.1V246.9M246.1 230.7V248.0M247.4 233.8V262.8M250.0 214.4V250.4M251.3 197.3V235.1M260.4 158.9V170.2M269.5 166.3V181.2M272.1 177.4V185.7M274.7 177.3V184.4M277.3 180.2V189.5M305.9 182.1V192.7M307.2 181.9V193.7M308.5 181.0V195.4M312.4 173.6V204.7" stroke="#1c861c" stroke-width="1.2" fill="none"/><path d="M118 277V332M217 128V198M181.4 250V307M248 238V264M315 149.5V203M263 148.6V168" stroke="#2a9c2a" stroke-width="1.2" fill="none"/><path d="M112.7 182.7H371.2" stroke="#9a9a9a" stroke-width="1" fill="none"/><path d="M112.7 207.7H368.2" stroke="#3f9a3f" stroke-width="1.2" stroke-dasharray="7 3 2 3" fill="none"/><path d="M314.2 105h6l-3 3.5z" fill="#9a9a9a"/><path d="M114.8 108.7h6.2l-3.1 3.4z" fill="#f0f0f0"/><circle cx="364.2" cy="111.5" r="4.2" fill="none" stroke="#d8d8d8" stroke-width="0.9"/><path d="M362.2 110.7h1.3M364.9 110.7h1.3" stroke="#d8d8d8" stroke-width="0.9"/><path d="M362.0 112.7q2.2 2 4.4 0" stroke="#d8d8d8" stroke-width="0.8" fill="none"/></svg>
<span class="t" style="left:124.10000000000001px;top:106px;font-size:8.3px;line-height:11px;color:#dedede;transform:scaleX(0.7912);transform-origin:0 0;">USDJPY,M1</span>
<span class="t" style="left:166.6px;top:106px;font-size:8.3px;line-height:11px;color:#dedede;transform:scaleX(0.9363);transform-origin:0 0;">112.675 112.677 112.657 112.672</span>
<span class="t" style="left:305.2px;top:106px;font-size:8.3px;line-height:11px;color:#dedede;transform:scaleX(0.9314);transform-origin:0 0;">ver.V23243457</span>
<span class="t" style="left:375.7px;top:126.60000000000001px;font-size:8.3px;line-height:11px;color:#dedede;transform:scaleX(0.9187);transform-origin:0 0;">112.710</span>
<span class="t" style="left:375.7px;top:160.3px;font-size:8.3px;line-height:11px;color:#dedede;transform:scaleX(0.9187);transform-origin:0 0;">112.685</span>
<span class="t" style="left:375.7px;top:194.0px;font-size:8.3px;line-height:11px;color:#dedede;transform:scaleX(0.9187);transform-origin:0 0;">112.660</span>
<span class="t" style="left:375.7px;top:227.70000000000002px;font-size:8.3px;line-height:11px;color:#dedede;transform:scaleX(0.9187);transform-origin:0 0;">112.635</span>
<span class="t" style="left:375.7px;top:261.40000000000003px;font-size:8.3px;line-height:11px;color:#dedede;transform:scaleX(0.9187);transform-origin:0 0;">112.610</span>
<span class="t" style="left:375.7px;top:295.1px;font-size:8.3px;line-height:11px;color:#dedede;transform:scaleX(0.9187);transform-origin:0 0;">112.585</span>
<span class="t" style="left:375.7px;top:328.8px;font-size:8.3px;line-height:11px;color:#dedede;transform:scaleX(0.9187);transform-origin:0 0;">112.560</span>
<div style="left:372.2px;top:178.2px;width:33px;height:9px;background:#f2f2f2;"></div>
<span class="t" style="left:375.7px;top:177.2px;font-size:8.3px;line-height:11px;color:#000;transform:scaleX(0.9187);transform-origin:0 0;">112.672</span>
<span class="t" style="left:113px;top:348.5px;font-size:8.3px;line-height:11px;color:#dedede;transform:scaleX(0.9190);transform-origin:0 0;">7 Dec 2018</span>
<span class="t" style="left:170px;top:348.5px;font-size:8.3px;line-height:11px;color:#dedede;transform:scaleX(0.9162);transform-origin:0 0;">7 Dec 21:55</span>
<span class="t" style="left:227px;top:348.5px;font-size:8.3px;line-height:11px;color:#dedede;transform:scaleX(0.9162);transform-origin:0 0;">7 Dec 22:43</span>
<span class="t" style="left:284px;top:348.5px;font-size:8.3px;line-height:11px;color:#dedede;transform:scaleX(0.9162);transform-origin:0 0;">7 Dec 23:31</span>
<div style="left:413.4px;top:80px;width:306.9px;height:287px;background:#e8eefb;"></div>
<div style="left:418.5px;top:103px;width:296.8px;height:259.3px;background:#f6f8fc;"></div>
<div style="left:418.5px;top:102.6px;width:295.5px;height:258.4px;background:#000;"></div>
<span class="t" style="left:519px;top:86px;font-size:13px;line-height:15px;color:#2e3846;transform:scaleX(0.8416);transform-origin:0 0;">USDJPY,M5</span>
<svg style="left:419px;top:87.5px;" width="11" height="11" viewBox="0 0 11 11" ><rect x="0.5" y="0.5" width="7" height="6" fill="#eef5fd" stroke="#6f9fd8" stroke-width="0.9"/><rect x="3.5" y="3.5" width="7" height="6.5" fill="#fff" stroke="#6f9fd8" stroke-width="0.9"/><rect x="4" y="4" width="6" height="1.6" fill="#9cc0ea"/></svg>
<div style="left:668.0px;top:86px;width:14px;height:14px;border:1px solid #bcc4d8;background:#eef1fa;"></div>
<div style="left:684.0px;top:86px;width:14px;height:14px;border:1px solid #bcc4d8;background:#eef1fa;"></div>
<div style="left:699.0px;top:86px;width:14px;height:14px;border:1px solid #bcc4d8;background:#eef1fa;"></div>
<div style="left:672.0px;top:95px;width:7px;height:2px;background:#111;"></div>
<div style="left:688.0px;top:90px;width:7px;height:7px;border:2px solid #111;"></div>
<svg style="left:702.0px;top:89px;" width="8" height="8" viewBox="0 0 8 8" ><path d="M1 1L7 7M7 1L1 7" stroke="#111" stroke-width="2" fill="none"/></svg>
<span class="t" style="left:425.7px;top:262.3px;font-size:8.3px;line-height:11px;color:#dcdcdc;transform:scaleX(0.8829);transform-origin:0 0;">#30548096 sell 0.10</span>
<svg style="left:0;top:0;" width="733" height="426" viewBox="0 0 733 426"><path d="M449.6 105.5V347" stroke="#8a8a8a" stroke-width="1" stroke-dasharray="1.6 2" fill="none"/><path d="M478.4 105.5V347" stroke="#8a8a8a" stroke-width="1" stroke-dasharray="1.6 2" fill="none"/><path d="M507.3 105.5V347" stroke="#8a8a8a" stroke-width="1" stroke-dasharray="1.6 2" fill="none"/><path d="M536.2 105.5V347" stroke="#8a8a8a" stroke-width="1" stroke-dasharray="1.6 2" fill="none"/><path d="M565.0 105.5V347" stroke="#8a8a8a" stroke-width="1" stroke-dasharray="1.6 2" fill="none"/><path d="M593.9 105.5V347" stroke="#8a8a8a" stroke-width="1" stroke-dasharray="1.6 2" fill="none"/><path d="M622.8 105.5V347" stroke="#8a8a8a" stroke-width="1" stroke-dasharray="1.6 2" fill="none"/><path d="M651.7 105.5V347" stroke="#8a8a8a" stroke-width="1" stroke-dasharray="1.6 2" fill="none"/><path d="M420.7 123.5H679.2" stroke="#8a8a8a" stroke-width="1" stroke-dasharray="1.6 2" fill="none"/><path d="M420.7 153.7H679.2" stroke="#8a8a8a" stroke-width="1" stroke-dasharray="1.6 2" fill="none"/><path d="M420.7 183.9H679.2" stroke="#8a8a8a" stroke-width="1" stroke-dasharray="1.6 2" fill="none"/><path d="M420.7 214.1H679.2" stroke="#8a8a8a" stroke-width="1" stroke-dasharray="1.6 2" fill="none"/><path d="M420.7 244.3H679.2" stroke="#8a8a8a" stroke-width="1" stroke-dasharray="1.6 2" fill="none"/><path d="M420.7 274.5H679.2" stroke="#8a8a8a" stroke-width="1" stroke-dasharray="1.6 2" fill="none"/><path d="M420.7 304.7H679.2" stroke="#8a8a8a" stroke-width="1" stroke-dasharray="1.6 2" fill="none"/><path d="M420.7 334.9H679.2" stroke="#8a8a8a" stroke-width="1" stroke-dasharray="1.6 2" fill="none"/><path d="M420.7 347.5V104.7H679.2V347.5" stroke="#9c9c9c" stroke-width="1.2" fill="none"/><path d="M420.7 347.5H679.2" stroke="#b8b8b8" stroke-width="1.2" fill="none"/><path d="M679.2 123.5h3" stroke="#c8c8c8" stroke-width="1"/><path d="M679.2 153.7h3" stroke="#c8c8c8" stroke-width="1"/><path d="M679.2 183.9h3" stroke="#c8c8c8" stroke-width="1"/><path d="M679.2 214.1h3" stroke="#c8c8c8" stroke-width="1"/><path d="M679.2 244.3h3" stroke="#c8c8c8" stroke-width="1"/><path d="M679.2 274.5h3" stroke="#c8c8c8" stroke-width="1"/><path d="M679.2 304.7h3" stroke="#c8c8c8" stroke-width="1"/><path d="M679.2 334.9h3" stroke="#c8c8c8" stroke-width="1"/><path d="M421.2 345v3" stroke="#e0e0e0" stroke-width="1"/><path d="M478.9 345v3" stroke="#e0e0e0" stroke-width="1"/><path d="M536.7 345v3" stroke="#e0e0e0" stroke-width="1"/><path d="M594.4 345v3" stroke="#e0e0e0" stroke-width="1"/><path d="M652.2 345v3" stroke="#e0e0e0" stroke-width="1"/><path d="M427.2 158.2V179.5M433.7 169.5V198.8M435.0 191.5V204.5M438.9 193.8V213.1M444.1 184.1V207.7M445.4 175.0V191.6M454.5 166.8V182.0M459.7 170.1V188.1M484.4 172.4V185.7M490.9 193.5V199.9M494.8 190.0V201.0M496.1 193.5V204.0M501.3 169.0V185.9M505.2 159.6V181.8M509.1 159.6V178.0M513.0 162.7V168.6M552.0 230.5V260.7M555.9 237.7V271.3M559.8 258.4V280.6M565.0 300.2V328.2M566.3 262.7V300.7M579.3 248.5V267.3M597.5 238.3V263.7M620.9 238.9V269.8M626.1 261.2V282.2M632.6 256.9V268.6M635.2 256.5V266.2" stroke="#1f8f1f" stroke-width="1.2" fill="none"/><path d="M432.4 164.4V170.0M442.8 207.2V226.3M449.3 171.3V190.3M450.6 169.1V178.3M463.6 177.6V184.0M476.6 176.7V191.3M479.2 162.7V180.9M483.1 162.7V181.5M498.7 186.4V191.9M510.4 159.8V177.6M518.2 136.5V143.1M527.3 167.3V214.7M535.1 187.2V215.7M536.4 168.8V220.0M540.3 165.0V220.0M542.9 183.4V208.3M545.5 212.5V262.0M554.6 243.6V252.3M561.1 275.4V308.9M571.5 270.6V293.9M580.6 244.3V265.1M581.9 230.2V262.0M584.5 234.6V260.4M587.1 212.6V223.7M591.0 223.7V251.3M598.8 263.2V285.8M600.1 280.3V320.4M615.7 272.9V284.1M617.0 262.5V281.9M630.0 244.9V261.9M633.9 259.8V271.3" stroke="#2ea32e" stroke-width="1.2" fill="none"/><path d="M428.5 146.7V164.1M437.6 197.3V215.6M461.0 170.3V196.0M464.9 162.5V178.1M467.5 155.4V178.5M468.8 163.7V170.1M492.2 189.5V202.2M497.4 188.2V203.3M502.6 169.9V183.0M515.6 147.0V161.7M516.9 133.0V147.5M526.0 178.1V215.4M529.9 174.5V207.9M537.7 160.8V216.4M548.1 215.8V244.1M549.4 225.3V268.0M557.2 262.9V271.6M567.6 263.4V290.0M575.4 232.1V270.2M578.0 230.7V265.3M585.8 205.2V235.1M588.4 206.0V232.0M596.2 218.0V249.5M605.3 275.5V304.0M613.1 284.5V307.7M614.4 277.4V293.9M631.3 247.7V260.8M637.8 256.1V271.0M640.4 251.4V269.8" stroke="#3cb043" stroke-width="1.2" fill="none"/><path d="M429.8 145.1V159.5M440.2 194.6V209.2M453.2 158.7V182.0M455.8 162.9V179.2M462.3 171.4V189.7M470.1 159.7V172.6M477.9 172.1V183.3M480.5 165.6V174.2M481.8 169.3V181.0M485.7 176.1V189.7M488.3 184.4V192.6M493.5 189.8V204.4M522.1 132.3V233.9M523.4 136.0V200.0M524.7 165.8V202.3M528.6 168.7V214.7M550.7 220.1V268.0M558.5 265.6V273.5M562.4 277.9V320.0M602.7 286.9V308.7M604.0 259.8V305.4M622.2 238.9V261.6M623.5 244.8V269.5M624.8 265.4V288.5M627.4 265.9V279.4M641.7 245.5V263.5" stroke="#279427" stroke-width="1.2" fill="none"/><path d="M422.0 154.6V170.6M423.3 160.0V178.9M431.1 139.4V172.6M446.7 170.1V194.0M448.0 167.0V192.9M458.4 168.5V180.6M475.3 179.3V190.4M487.0 180.2V184.8M507.8 155.1V174.4M514.3 160.8V171.7M519.5 123.9V156.3M520.8 155.8V262.1M533.8 178.2V221.8M544.2 173.9V216.3M546.8 213.4V260.6M568.9 277.3V287.0M570.2 286.5V309.6M572.8 257.3V271.1M574.1 232.7V257.8M576.7 227.1V254.8M583.2 243.9V262.9M593.6 224.6V252.2M609.2 256.0V279.2M610.5 263.1V282.5M619.6 269.5V280.2M628.7 260.7V265.9M636.5 258.4V269.8M639.1 256.4V264.0" stroke="#46b84a" stroke-width="1.2" fill="none"/><path d="M424.6 159.9V182.0M425.9 161.6V174.3M436.3 188.1V204.0M441.5 196.6V221.0M451.9 156.2V178.4M457.1 157.5V182.0M466.2 165.9V179.8M471.4 169.4V183.2M472.7 173.7V193.6M474.0 173.2V192.9M489.6 186.5V195.6M500.0 175.4V191.4M503.9 163.0V179.9M506.5 166.5V173.8M511.7 160.4V168.0M531.2 196.1V234.0M532.5 179.5V236.2M539.0 171.5V208.5M541.6 179.5V213.3M553.3 235.0V268.9M563.7 299.1V319.9M589.7 231.5V250.4M592.3 226.6V249.0M594.9 223.2V250.6M601.4 289.3V302.9M606.6 258.2V288.2M607.9 266.6V286.5M611.8 275.2V295.2M618.3 266.6V279.9" stroke="#1c861c" stroke-width="1.2" fill="none"/><path d="M521 150V296M523.5 120.5V200M517.8 121.4V158M564 297V336M601.8 275V328M613.5 265V317M570.5 273.6V313M442.8 193V234M532 180V240M586.6 203.6V232M576.8 225V268" stroke="#2a9c2a" stroke-width="1.2" fill="none"/><path d="M420.7 261.6H679.2" stroke="#9a9a9a" stroke-width="1" fill="none"/><path d="M420.7 272.3H676.2" stroke="#3f9a3f" stroke-width="1.2" stroke-dasharray="7 3 2 3" fill="none"/><path d="M622.2 105h6l-3 3.5z" fill="#9a9a9a"/><path d="M422.8 108.7h6.2l-3.1 3.4z" fill="#f0f0f0"/><circle cx="672.2" cy="111.5" r="4.2" fill="none" stroke="#d8d8d8" stroke-width="0.9"/><path d="M670.2 110.7h1.3M672.9 110.7h1.3" stroke="#d8d8d8" stroke-width="0.9"/><path d="M670.0 112.7q2.2 2 4.4 0" stroke="#d8d8d8" stroke-width="0.8" fill="none"/></svg>
<span class="t" style="left:432.09999999999997px;top:106px;font-size:8.3px;line-height:11px;color:#dedede;transform:scaleX(0.7912);transform-origin:0 0;">USDJPY,M5</span>
<span class="t" style="left:474.59999999999997px;top:106px;font-size:8.3px;line-height:11px;color:#dedede;transform:scaleX(0.9363);transform-origin:0 0;">112.684 112.697 112.657 112.672</span>
<span class="t" style="left:613.2px;top:106px;font-size:8.3px;line-height:11px;color:#dedede;transform:scaleX(0.9393);transform-origin:0 0;">ver.F23243457</span>
<span class="t" style="left:683.7px;top:118.3px;font-size:8.3px;line-height:11px;color:#dedede;transform:scaleX(0.9187);transform-origin:0 0;">112.900</span>
<span class="t" style="left:683.7px;top:148.5px;font-size:8.3px;line-height:11px;color:#dedede;transform:scaleX(0.9187);transform-origin:0 0;">112.850</span>
<span class="t" style="left:683.7px;top:178.70000000000002px;font-size:8.3px;line-height:11px;color:#dedede;transform:scaleX(0.9187);transform-origin:0 0;">112.800</span>
<span class="t" style="left:683.7px;top:208.9px;font-size:8.3px;line-height:11px;color:#dedede;transform:scaleX(0.9187);transform-origin:0 0;">112.750</span>
<span class="t" style="left:683.7px;top:239.10000000000002px;font-size:8.3px;line-height:11px;color:#dedede;transform:scaleX(0.9187);transform-origin:0 0;">112.700</span>
<span class="t" style="left:683.7px;top:269.3px;font-size:8.3px;line-height:11px;color:#dedede;transform:scaleX(0.9187);transform-origin:0 0;">112.650</span>
<span class="t" style="left:683.7px;top:299.5px;font-size:8.3px;line-height:11px;color:#dedede;transform:scaleX(0.9187);transform-origin:0 0;">112.600</span>
<span class="t" style="left:683.7px;top:329.7px;font-size:8.3px;line-height:11px;color:#dedede;transform:scaleX(0.9187);transform-origin:0 0;">112.550</span>
<div style="left:680.2px;top:257.1px;width:33px;height:9px;background:#f2f2f2;"></div>
<span class="t" style="left:683.7px;top:256.1px;font-size:8.3px;line-height:11px;color:#000;transform:scaleX(0.9187);transform-origin:0 0;">112.672</span>
<span class="t" style="left:421px;top:348.5px;font-size:8.3px;line-height:11px;color:#dedede;transform:scaleX(0.9190);transform-origin:0 0;">7 Dec 2018</span>
<span class="t" style="left:478px;top:348.5px;font-size:8.3px;line-height:11px;color:#dedede;transform:scaleX(0.9162);transform-origin:0 0;">7 Dec 12:35</span>
<span class="t" style="left:535px;top:348.5px;font-size:8.3px;line-height:11px;color:#dedede;transform:scaleX(0.9162);transform-origin:0 0;">7 Dec 16:35</span>
<span class="t" style="left:592px;top:348.5px;font-size:8.3px;line-height:11px;color:#dedede;transform:scaleX(0.9162);transform-origin:0 0;">7 Dec 20:35</span>
<div style="left:571px;top:270px;width:4px;height:4px;background:#e8413a;border-radius:2px;"></div>
<div style="left:105px;top:370px;width:618px;height:14px;background:#f0f0f0;"></div>
<div style="left:109px;top:369.5px;width:65px;height:13.5px;background:#fff;border:1px solid #4a4a4a;border-top:none;"></div>
<span class="t" style="left:117px;top:370px;font-size:9px;line-height:13px;color:#111;transform:scaleX(0.9725);transform-origin:0 0;">USDJPY,M1</span>
<span class="t" style="left:184px;top:370px;font-size:9px;line-height:13px;color:#9a9a9a;transform:scaleX(0.9725);transform-origin:0 0;">USDJPY,M5</span>
<div style="left:241px;top:371px;width:1px;height:10px;background:#a0a0a0;"></div>
<svg style="left:698px;top:372px;" width="18" height="7" viewBox="0 0 18 7" ><path d="M4 0.500v5L1 3z" fill="#a8a8a8"/><path d="M14 0.500v5l3-2.500z" fill="#a8a8a8"/></svg>
<div style="left:6px;top:383px;width:717px;height:1px;background:#dcdcdc;"></div>
<svg style="left:10px;top:388px;" width="6" height="6" viewBox="0 0 6 6" ><path d="M0.700 0.700L4.800 4.800M4.800 0.700L0.700 4.800" stroke="#111" stroke-width="1.300" fill="none"/></svg>
<div style="left:12px;top:395px;width:2px;height:6px;background:repeating-linear-gradient(#b0b0b0 0 1px,#f0f0f0 1px 2px);"></div>
<div style="left:18px;top:386px;width:703px;height:18px;background:#fff;border:1px solid #e0e0e0;border-top-color:#a9a9a9;border-left-color:#c4c4c4;"></div>
<div style="left:22px;top:393px;width:5px;height:5px;background:#a9a9a9;border-radius:3px;border:1px solid #8a8a8a;"></div>
<span class="t" style="left:32px;top:388px;font-size:9.5px;line-height:14px;color:#222;transform:scaleX(0.9814);transform-origin:0 0;">残高: 1 135 237 JPY</span>
<span class="t" style="left:125px;top:388px;font-size:9.5px;line-height:14px;color:#222;transform:scaleX(1.0038);transform-origin:0 0;">損益計: -648</span>
<span class="t" style="left:184px;top:388px;font-size:9.5px;line-height:14px;color:#222;transform:scaleX(0.9890);transform-origin:0 0;">有効証拠金: 1 134 589</span>
<span class="t" style="left:285px;top:388px;font-size:9.5px;line-height:14px;color:#222;transform:scaleX(0.9796);transform-origin:0 0;">必要証拠金: 1 269</span>
<span class="t" style="left:367px;top:388px;font-size:9.5px;line-height:14px;color:#222;transform:scaleX(0.9785);transform-origin:0 0;">余剰証拠金: 1 133 320</span>
<span class="t" style="left:467px;top:388px;font-size:9.5px;line-height:14px;color:#222;transform:scaleX(0.9877);transform-origin:0 0;">証拠金維持率: 89408.00%</span>
<div style="left:6px;top:406px;width:717px;height:1px;background:#d4d4d4;"></div>
<div style="left:151px;top:409px;width:1px;height:13px;background:#d0d0d0;"></div>
<div style="left:251px;top:409px;width:1px;height:13px;background:#d0d0d0;"></div>
<div style="left:342px;top:409px;width:1px;height:13px;background:#d0d0d0;"></div>
<div style="left:465px;top:409px;width:1px;height:13px;background:#d0d0d0;"></div>
<div style="left:525px;top:409px;width:1px;height:13px;background:#d0d0d0;"></div>
<div style="left:587px;top:409px;width:1px;height:13px;background:#d0d0d0;"></div>
<div style="left:646px;top:409px;width:1px;height:13px;background:#d0d0d0;"></div>
<span class="t" style="left:8px;top:409.5px;font-size:9.5px;line-height:14px;color:#222;transform:scaleX(0.7759);transform-origin:0 0;">F1キーでヘルプが表示されます</span>
<span class="t" style="left:155px;top:409.5px;font-size:9.5px;line-height:14px;color:#222;transform:scaleX(1.0296);transform-origin:0 0;">Default</span>
<span class="t" style="left:671px;top:409.5px;font-size:9.5px;line-height:14px;color:#222;transform:scaleX(1.0004);transform-origin:0 0;">1780592</span>
<svg style="left:649px;top:412px;" width="18" height="8" viewBox="0 0 18 8" ><rect x="0" y="0" width="1.6" height="7.0" fill="#6a8f1f"/><rect x="0" y="7.0" width="1.6" height="1.0" fill="#1f4f86"/><rect x="2" y="0" width="1.6" height="6.5" fill="#6a8f1f"/><rect x="2" y="6.5" width="1.6" height="1.6" fill="#1f4f86"/><rect x="4" y="0" width="1.6" height="5.9" fill="#6a8f1f"/><rect x="4" y="5.9" width="1.6" height="2.1" fill="#1f4f86"/><rect x="6" y="0" width="1.6" height="5.3" fill="#6a8f1f"/><rect x="6" y="5.3" width="1.6" height="2.7" fill="#1f4f86"/><rect x="8" y="0" width="1.6" height="4.8" fill="#6a8f1f"/><rect x="8" y="4.8" width="1.6" height="3.2" fill="#1f4f86"/><rect x="10" y="0" width="1.6" height="4.2" fill="#6a8f1f"/><rect x="10" y="4.2" width="1.6" height="3.8" fill="#1f4f86"/><rect x="12" y="0" width="1.6" height="3.7" fill="#6a8f1f"/><rect x="12" y="3.7" width="1.6" height="4.3" fill="#1f4f86"/><rect x="14" y="0" width="1.6" height="3.1" fill="#6a8f1f"/><rect x="14" y="3.1" width="1.6" height="4.9" fill="#1f4f86"/><rect x="16" y="0" width="1.6" height="2.6" fill="#6a8f1f"/><rect x="16" y="2.6" width="1.6" height="5.4" fill="#1f4f86"/></svg>
<svg style="left:712px;top:413px;" width="11" height="11" viewBox="0 0 11 11" ><path d="M10 1L1 10M10 5L5 10M10 8.500L8.500 10" stroke="#cdcdcd" stroke-width="1.2"/></svg>
<div style="left:266px;top:0px;width:121px;height:53px;background:rgba(96,96,96,0.72);"></div>
<div style="left:328px;top:17px;width:1px;height:30px;background:rgba(140,140,140,0.6);"></div>
<div style="left:281px;top:19px;width:30px;height:2px;background:#fff;"></div>
<div style="left:281px;top:26px;width:30px;height:2px;background:#fff;"></div>
<div style="left:281px;top:33px;width:30px;height:2px;background:#fff;"></div>
<svg style="left:339px;top:17px;" width="35" height="20" viewBox="0 0 35 20" ><rect x="1.250" y="1.250" width="32.500" height="17.500" rx="2.500" fill="none" stroke="#fff" stroke-width="2.500"/><rect x="4.5" y="4.5" width="2.600" height="2" fill="#fff"/><rect x="8.4" y="4.5" width="2.600" height="2" fill="#fff"/><rect x="12.3" y="4.5" width="2.600" height="2" fill="#fff"/><rect x="16.2" y="4.5" width="2.600" height="2" fill="#fff"/><rect x="20.1" y="4.5" width="2.600" height="2" fill="#fff"/><rect x="24.0" y="4.5" width="2.600" height="2" fill="#fff"/><rect x="27.9" y="4.5" width="2.600" height="2" fill="#fff"/><rect x="4.5" y="7.8" width="2.600" height="2" fill="#fff"/><rect x="8.4" y="7.8" width="2.600" height="2" fill="#fff"/><rect x="12.3" y="7.8" width="2.600" height="2" fill="#fff"/><rect x="16.2" y="7.8" width="2.600" height="2" fill="#fff"/><rect x="20.1" y="7.8" width="2.600" height="2" fill="#fff"/><rect x="24.0" y="7.8" width="2.600" height="2" fill="#fff"/><rect x="27.9" y="7.8" width="2.600" height="2" fill="#fff"/><rect x="4.5" y="11.1" width="2.600" height="2" fill="#fff"/><rect x="8.4" y="11.1" width="2.600" height="2" fill="#fff"/><rect x="12.3" y="11.1" width="2.600" height="2" fill="#fff"/><rect x="16.2" y="11.1" width="2.600" height="2" fill="#fff"/><rect x="20.1" y="11.1" width="2.600" height="2" fill="#fff"/><rect x="24.0" y="11.1" width="2.600" height="2" fill="#fff"/><rect x="27.9" y="11.1" width="2.600" height="2" fill="#fff"/><rect x="10" y="14.300" width="15" height="2" fill="#fff"/></svg>
<svg style="left:431px;top:50px;" width="9" height="14" viewBox="0 0 9 14" ><path d="M0.700 0.700v11l2.600-2.500 1.900 4.200 1.700-.800-1.900-4.100h3.500z" fill="#fff" stroke="#222" stroke-width="0.900"/></svg>
</body></html>
